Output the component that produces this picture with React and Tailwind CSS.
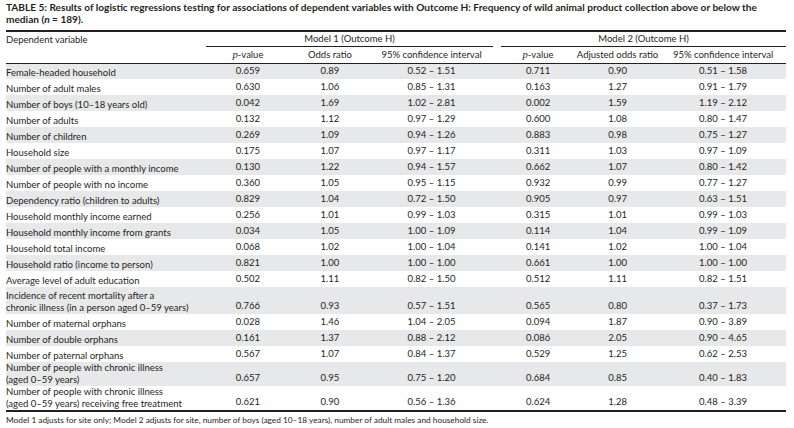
import React from "react";

const rows = [
  ["Female-headed household", "0.659", "0.89", "0.52 – 1.51", "0.711", "0.90", "0.51 – 1.58"],
  ["Number of adult males", "0.630", "1.06", "0.85 – 1.31", "0.163", "1.27", "0.91 – 1.79"],
  ["Number of boys (10–18 years old)", "0.042", "1.69", "1.02 – 2.81", "0.002", "1.59", "1.19 – 2.12"],
  ["Number of adults", "0.132", "1.12", "0.97 – 1.29", "0.600", "1.08", "0.80 – 1.47"],
  ["Number of children", "0.269", "1.09", "0.94 – 1.26", "0.883", "0.98", "0.75 – 1.27"],
  ["Household size", "0.175", "1.07", "0.97 – 1.17", "0.311", "1.03", "0.97 – 1.09"],
  ["Number of people with a monthly income", "0.130", "1.22", "0.94 – 1.57", "0.662", "1.07", "0.80 – 1.42"],
  ["Number of people with no income", "0.360", "1.05", "0.95 – 1.15", "0.932", "0.99", "0.77 – 1.27"],
  ["Dependency ratio (children to adults)", "0.829", "1.04", "0.72 – 1.50", "0.905", "0.97", "0.63 – 1.51"],
  ["Household monthly income earned", "0.256", "1.01", "0.99 – 1.03", "0.315", "1.01", "0.99 – 1.03"],
  ["Household monthly income from grants", "0.034", "1.05", "1.00 – 1.09", "0.114", "1.04", "0.99 – 1.09"],
  ["Household total income", "0.068", "1.02", "1.00 – 1.04", "0.141", "1.02", "1.00 – 1.04"],
  ["Household ratio (income to person)", "0.821", "1.00", "1.00 – 1.00", "0.661", "1.00", "1.00 – 1.00"],
  ["Average level of adult education", "0.502", "1.11", "0.82 – 1.50", "0.512", "1.11", "0.82 – 1.51"],
  [["Incidence of recent mortality after a", "chronic illness (in a person aged 0–59 years)"], "0.766", "0.93", "0.57 – 1.51", "0.565", "0.80", "0.37 – 1.73", "h-[27px]"],
  ["Number of maternal orphans", "0.028", "1.46", "1.04 – 2.05", "0.094", "1.87", "0.90 – 3.89"],
  ["Number of double orphans", "0.161", "1.37", "0.88 – 2.12", "0.086", "2.05", "0.90 – 4.65"],
  ["Number of paternal orphans", "0.567", "1.07", "0.84 – 1.37", "0.529", "1.25", "0.62 – 2.53"],
  [["Number of people with chronic illness", "(aged 0–59 years)"], "0.657", "0.95", "0.75 – 1.20", "0.684", "0.85", "0.40 – 1.83", "h-[24px]"],
  [["Number of people with chronic illness", "(aged 0–59 years) receiving free treatment"], "0.621", "0.90", "0.56 – 1.36", "0.624", "1.28", "0.48 – 3.39", "h-[24px]"],
];

const PVal = () => (
  <>
    <span className="italic font-['Liberation_Serif',serif] text-[10.5px]">p</span>-value
  </>
);

const cell = "text-center align-bottom pb-[2px] leading-[12px] p-0";

export default function App() {
  return (
    <div className="w-[794px] h-[428px] bg-white text-[#231f20] font-['Lato',sans-serif] overflow-hidden">
      <div className="pl-[6px] pt-[1px] w-[788px]">
        <p className="font-bold text-[10.1px] leading-[12px] w-[782px]">
          TABLE 5: Results of logistic regressions testing for associations of dependent variables with Outcome H: Frequency of wild animal product collection above or below the median (<span className="italic">n</span>&nbsp;= 189).
        </p>
        <table className="table-fixed w-[780px] border-collapse mt-[5px] text-[9.5px]">
          <colgroup>
            <col className="w-[200px]" />
            <col className="w-[84px]" />
            <col className="w-[80px]" />
            <col className="w-[123px]" />
            <col className="w-[8px]" />
            <col className="w-[74px]" />
            <col className="w-[85px]" />
            <col className="w-[126px]" />
          </colgroup>
          <thead className="border-t-2 border-[#231f20]">
            <tr className="h-[15px]">
              <th className="text-left font-normal align-middle leading-[12px] p-0">Dependent variable</th>
              <th colSpan={3} className="font-normal p-0 align-bottom">
                <div className="border-b border-[#231f20] leading-[14px]">Model 1 (Outcome H)</div>
              </th>
              <th className="p-0"></th>
              <th colSpan={3} className="font-normal p-0 align-bottom">
                <div className="border-b border-[#231f20] leading-[14px]">Model 2 (Outcome H)</div>
              </th>
            </tr>
            <tr className="h-[16px] border-b border-[#231f20] whitespace-nowrap">
              <th className="p-0"></th>
              <th className="font-normal p-0 leading-[12px]"><PVal /></th>
              <th className="font-normal p-0 leading-[12px]">Odds ratio</th>
              <th className="font-normal p-0 leading-[12px]">95% confidence interval</th>
              <th className="p-0"></th>
              <th className="font-normal p-0 leading-[12px]"><PVal /></th>
              <th className="font-normal p-0 leading-[12px]">Adjusted odds ratio</th>
              <th className="font-normal p-0 leading-[12px]">95% confidence interval</th>
            </tr>
          </thead>
          <tbody className="border-b-2 border-[#231f20]">
            {rows.map((r, i) => (
              <tr key={i} className={`${r[7] || "h-[16px]"} ${i % 2 === 0 ? "bg-[#e7e8e9]" : ""}`}>
                <td className="align-bottom pb-[1px] leading-[11.5px] whitespace-nowrap p-0">
                  {Array.isArray(r[0]) ? (
                    <>
                      {r[0][0]}
                      <br />
                      {r[0][1]}
                    </>
                  ) : (
                    r[0]
                  )}
                </td>
                <td className={cell}>{r[1]}</td>
                <td className={cell}>{r[2]}</td>
                <td className={cell}>{r[3]}</td>
                <td className="p-0"></td>
                <td className={cell}>{r[4]}</td>
                <td className={cell}>{r[5]}</td>
                <td className={cell}>{r[6]}</td>
              </tr>
            ))}
          </tbody>
        </table>
        <p className="text-[8.3px] leading-[10px] mt-[3px]">
          Model 1 adjusts for site only; Model 2 adjusts for site, number of boys (aged 10–18 years), number of adult males and household size.
        </p>
      </div>
    </div>
  );
}
